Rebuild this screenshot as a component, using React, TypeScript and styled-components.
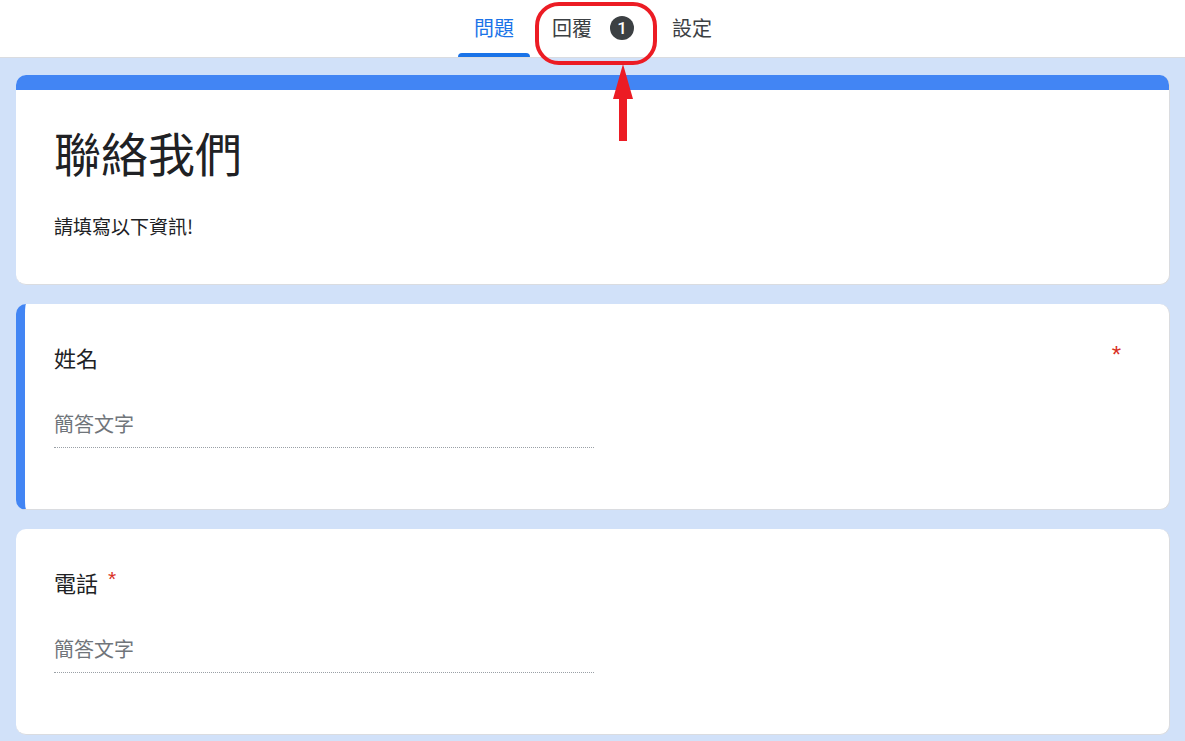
import React from 'react';
import styled, { createGlobalStyle } from 'styled-components';

const GlobalStyle = createGlobalStyle`
  html, body {
    margin: 0;
    padding: 0;
    background: #d1e1f9;
    font-family: "Noto Sans CJK TC", "Noto Sans", "Liberation Sans", sans-serif;
    color: #202124;
  }
`;

type Question = {
  id: string;
  label: string;
  active?: boolean;
  starRight?: boolean;
};

const questions: Question[] = [
  { id: 'name', label: '姓名', active: true, starRight: true },
  { id: 'phone', label: '電話' },
];

export default function App() {
  return (
    <>
      <GlobalStyle />
      <Page>
        <Header>
          <Tabs>
            <Tab $active>問題</Tab>
            <Tab>
              回覆
              <Badge>1</Badge>
            </Tab>
            <Tab>設定</Tab>
          </Tabs>
          <Callout />
          <Arrow width="20" height="77" viewBox="0 0 20 77">
            <polygon points="10,0 20,35 14,35 14,77 6,77 6,35 0,35" fill="#ec1c24" />
          </Arrow>
        </Header>

        <Content>
          <TitleCard>
            <TopBar />
            <TitleBody>
              <FormTitle>聯絡我們</FormTitle>
              <FormDesc>請填寫以下資訊!</FormDesc>
            </TitleBody>
          </TitleCard>

          {questions.map(q => (
            <QuestionCard key={q.id} $active={q.active}>
              <LabelRow>
                <Label>
                  {q.label}
                  {!q.starRight && <InlineStar>*</InlineStar>}
                </Label>
                {q.starRight && <RightStar>*</RightStar>}
              </LabelRow>
              <AnswerField>簡答文字</AnswerField>
            </QuestionCard>
          ))}
        </Content>
      </Page>
    </>
  );
}

const Page = styled.div`
  width: 1185px;
  min-height: 741px;
  overflow: hidden;
`;

const Header = styled.div`
  position: relative;
  height: 57px;
  background: #ffffff;
  border-bottom: 1px solid #dadce0;
  display: flex;
  justify-content: center;
`;

const Tabs = styled.div`
  display: flex;
  align-items: stretch;
  margin-left: 1px;
`;

const Tab = styled.div<{ $active?: boolean }>`
  position: relative;
  display: flex;
  align-items: center;
  gap: 18px;
  padding: 0 19px 2px;
  font-size: 20px;
  color: ${p => (p.$active ? '#1a73e8' : '#3c4043')};

  &::after {
    content: '';
    display: ${p => (p.$active ? 'block' : 'none')};
    position: absolute;
    left: 3px;
    right: 3px;
    bottom: 0;
    height: 4px;
    border-radius: 4px 4px 0 0;
    background: #1a73e8;
  }
`;

const Badge = styled.span`
  display: inline-flex;
  align-items: center;
  justify-content: center;
  width: 24px;
  height: 24px;
  border-radius: 12px;
  background: #3c4043;
  color: #ffffff;
  font-family: "Roboto", "Liberation Sans", sans-serif;
  font-size: 17px;
  font-weight: 500;
`;

const Callout = styled.div`
  position: absolute;
  left: 535px;
  top: 2px;
  width: 114px;
  height: 55px;
  border: 4px solid #ec1c24;
  border-radius: 24px;
  z-index: 2;
`;

const Arrow = styled.svg`
  position: absolute;
  left: 613px;
  top: 64px;
  z-index: 2;
`;

const Content = styled.div`
  display: flex;
  flex-direction: column;
  gap: 19px;
  padding: 17px 15px 0 16px;
`;

const Card = styled.div`
  background: #ffffff;
  border-radius: 10px;
  border: 1px solid #dadce0;
  border-top: none;
  border-left: none;
  overflow: hidden;
`;

const TitleCard = styled(Card)``;

const TopBar = styled.div`
  height: 15px;
  background: #4285f4;
`;

const TitleBody = styled.div`
  padding: 32px 40px 44px 38px;
`;

const FormTitle = styled.h1`
  margin: 0;
  font-size: 47px;
  font-weight: 400;
  line-height: 60px;
  color: #202124;
`;

const FormDesc = styled.p`
  margin: 30px 0 0;
  font-size: 19px;
  line-height: 28px;
  color: #202124;
`;

const QuestionCard = styled(Card)<{ $active?: boolean }>`
  padding: 38px 48px 61px ${p => (p.$active ? '29px' : '38px')};
  border-left: ${p => (p.$active ? '9px solid #4285f4' : 'none')};
  min-height: 205px;
  box-sizing: border-box;
`;

const LabelRow = styled.div`
  display: flex;
  justify-content: space-between;
  align-items: flex-start;
`;

const Label = styled.div`
  display: flex;
  align-items: flex-start;
  font-size: 22px;
  line-height: 30px;
  color: #202124;
`;

const Star = styled.span`
  color: #d93025;
  font-family: "Liberation Sans", "DejaVu Sans", sans-serif;
  font-size: 24px;
  line-height: 30px;
`;

const InlineStar = styled(Star)`
  margin-left: 10px;
  margin-top: -3px;
  font-size: 21px;
`;

const RightStar = styled(Star)`
  margin-top: -2px;
`;

const AnswerField = styled.div`
  margin-top: 38px;
  width: 540px;
  padding-bottom: 9px;
  border-bottom: 1px dotted #9aa0a6;
  font-size: 20px;
  line-height: 28px;
  color: #70757a;
`;
